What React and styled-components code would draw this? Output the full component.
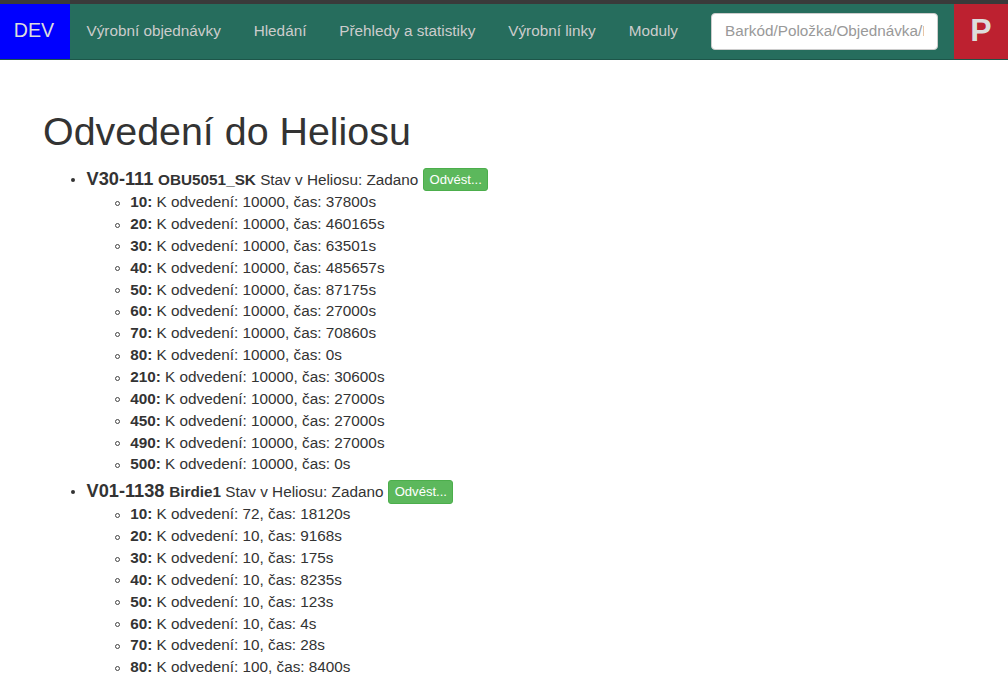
import React from "react";
import styled, { createGlobalStyle } from "styled-components";

const Global = createGlobalStyle`
  html, body { margin: 0; padding: 0; background: #fff; }
  body {
    font-family: "Liberation Sans", Arial, sans-serif;
    font-size: 15.3px;
    line-height: 1.42857;
    color: #333;
    height: 677px;
    overflow: hidden;
  }
`;

const Page = styled.div`
  border-top: 4px solid #3a3a3a;
`;

const Navbar = styled.nav`
  display: flex;
  align-items: stretch;
  height: 55px;
  background: #266d5d;
  border-bottom: 1px solid #1d5549;
`;

const Brand = styled.a`
  width: 70px;
  padding: 0 2px 2px 0;
  box-sizing: border-box;
  background: #0000ff;
  color: #ddd;
  font-size: 19.6px;
  display: flex;
  align-items: center;
  justify-content: center;
`;

const Menu = styled.div`
  display: flex;
  align-items: center;
  padding-bottom: 2px;
  box-sizing: border-box;
  flex: 1;
`;

const MenuItem = styled.a`
  color: #ccc;
  font-size: 15.3px;
  padding: 0 16.45px;
  white-space: nowrap;
`;

const Search = styled.input`
  box-sizing: border-box;
  width: 227px;
  height: 37px;
  margin-right: 16px;
  align-self: center;
  padding: 0 13px 2px;
  border: 1px solid #ccc;
  border-radius: 4px;
  background: #fff;
  font-family: inherit;
  font-size: 15.3px;
  color: #555;
  &::placeholder { color: #999; opacity: 1; }
`;

const UserBox = styled.a`
  width: 54px;
  padding-bottom: 2px;
  box-sizing: border-box;
  background: #bd2130;
  color: #ddd;
  font-size: 32px;
  font-weight: 700;
  display: flex;
  align-items: center;
  justify-content: center;
`;

const Main = styled.main`
  padding: 0 43px;
`;

const Title = styled.h1`
  font-size: 39.4px;
  font-weight: 500;
  line-height: 1.1;
  margin: 50px 0 11px;
`;

const OrderList = styled.ul`
  margin: 0;
  padding-left: 43.6px;
  list-style: none;
`;

const Order = styled.li`
  position: relative;
  padding-top: 1.5px;
  &::before {
    content: "";
    position: absolute;
    left: -15.6px;
    top: 13.5px;
    width: 4px;
    height: 4px;
    border-radius: 50%;
    background: #333;
  }
`;

const OrderCode = styled.strong`
  font-size: 18.2px;
`;

const Item = styled.strong`
  font-size: 15.3px;
  margin-left: 0.5px;
`;

const Submit = styled.button`
  font-family: inherit;
  font-size: 13.08px;
  line-height: 1.5;
  padding: 1px 5.45px;
  margin: 0 0 -1px 0.5px;
  position: relative;
  top: -1px;
  color: #fff;
  background: #5cb85c;
  border: 1px solid #4cae4c;
  border-radius: 3px;
`;

const OpList = styled.ul`
  margin: -0.6px 0 1.2px;
  padding-left: 43.6px;
  list-style: none;
`;

const Op = styled.li`
  position: relative;
  &::before {
    content: "";
    position: absolute;
    left: -15px;
    top: 9.5px;
    box-sizing: border-box;
    width: 5px;
    height: 5px;
    border-radius: 50%;
    border: 1px solid #444;
  }
`;

const orders = [
  {
    code: "V30-111",
    item: "OBU5051_SK",
    ops: [
      ["10", "10000", "37800"], ["20", "10000", "460165"], ["30", "10000", "63501"],
      ["40", "10000", "485657"], ["50", "10000", "87175"], ["60", "10000", "27000"],
      ["70", "10000", "70860"], ["80", "10000", "0"], ["210", "10000", "30600"],
      ["400", "10000", "27000"], ["450", "10000", "27000"], ["490", "10000", "27000"],
      ["500", "10000", "0"],
    ],
  },
  {
    code: "V01-1138",
    item: "Birdie1",
    ops: [
      ["10", "72", "18120"], ["20", "10", "9168"], ["30", "10", "175"],
      ["40", "10", "8235"], ["50", "10", "123"], ["60", "10", "4"],
      ["70", "10", "28"], ["80", "100", "8400"],
    ],
  },
];

const links = ["Výrobní objednávky", "Hledání", "Přehledy a statistiky", "Výrobní linky", "Moduly"];

export default function App() {
  return (
    <Page>
      <Global />
      <Navbar>
        <Brand>DEV</Brand>
        <Menu>
          {links.map((l) => <MenuItem key={l}>{l}</MenuItem>)}
        </Menu>
        <Search placeholder="Barkód/Položka/Objednávka/Linka" />
        <UserBox>P</UserBox>
      </Navbar>
      <Main>
        <Title>Odvedení do Heliosu</Title>
        <OrderList>
          {orders.map((o) => (
            <Order key={o.code}>
              <OrderCode>{o.code}</OrderCode> <Item>{o.item}</Item> Stav v Heliosu: Zadano <Submit>Odvést...</Submit>
              <OpList>
                {o.ops.map(([n, q, t]) => (
                  <Op key={n}><strong>{n}:</strong> K odvedení: {q}, čas: {t}s</Op>
                ))}
              </OpList>
            </Order>
          ))}
        </OrderList>
      </Main>
    </Page>
  );
}
